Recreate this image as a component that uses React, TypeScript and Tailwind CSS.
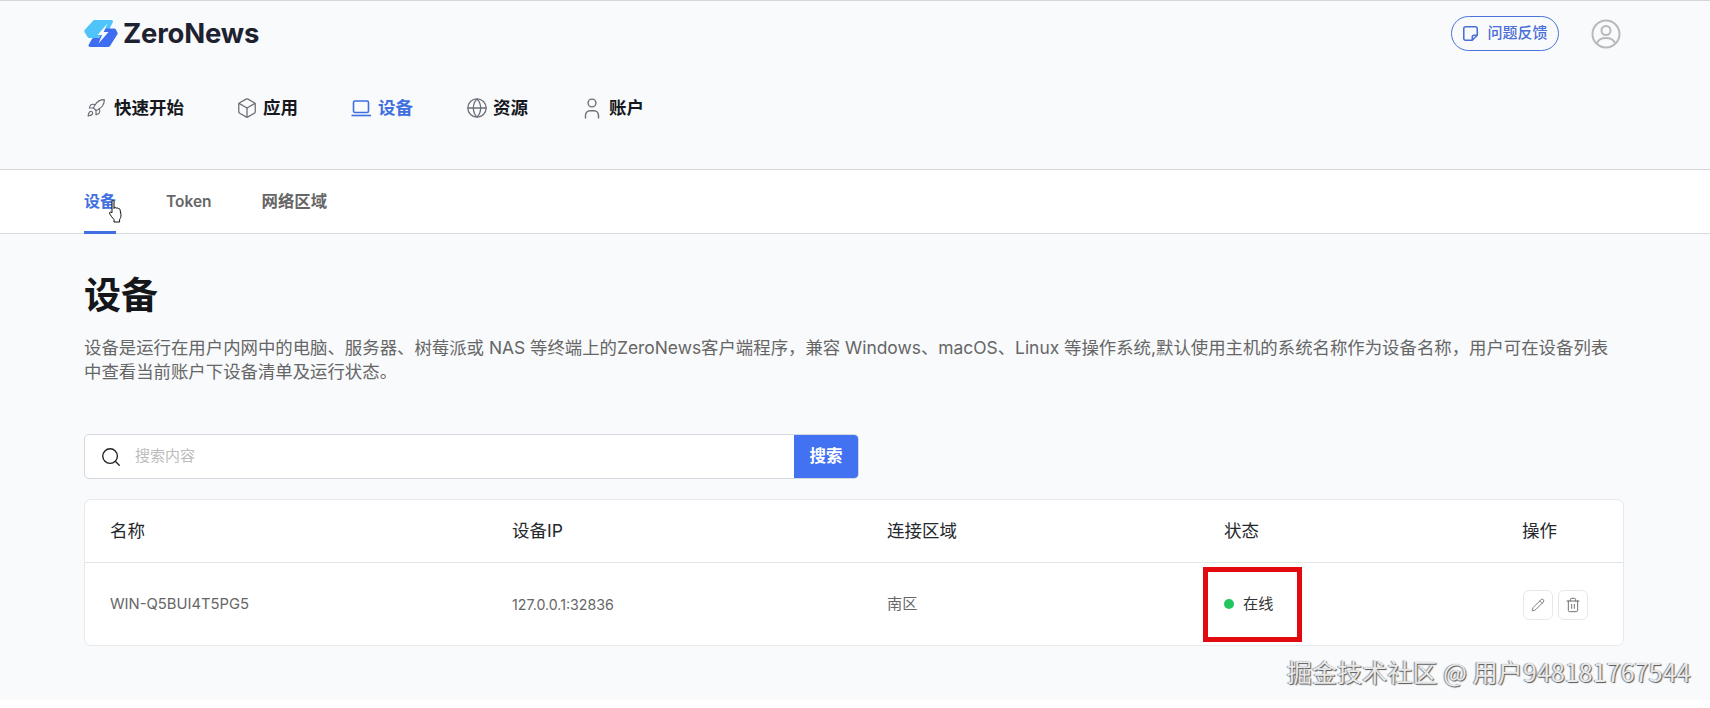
import { Box, Globe, Pencil, Rocket, Search, Trash2 } from 'lucide-react';

const FONT = "font-['Inter','Noto_Sans_CJK_SC',sans-serif]";

const NAV_ITEMS = [
  { label: '快速开始', icon: <Rocket className="h-[20px] w-[20px]" strokeWidth={1.4} />, gap: 'ml-[8px]', mr: 'mr-[52px]' },
  { label: '应用', icon: <Box className="h-[22px] w-[22px]" strokeWidth={1.4} />, gap: 'ml-[5px]', mr: 'mr-[53px]' },
  { label: '设备', icon: <LaptopIcon />, gap: 'ml-[6px]', mr: 'mr-[53px]', active: true },
  { label: '资源', icon: <Globe className="h-[22px] w-[22px]" strokeWidth={1.4} />, gap: 'ml-[5px]', mr: 'mr-[56px]' },
  { label: '账户', icon: <UserIcon />, gap: 'ml-[9px]', mr: '' },
];

function LaptopIcon() {
  return (
    <svg width="21" height="20" viewBox="0 0 21 20" fill="none" stroke="currentColor" strokeWidth="1.6">
      <rect x="2.5" y="3" width="15" height="11.500" rx="1.500" />
      <path d="M0.500 17.500h19.500" />
    </svg>
  );
}

function UserIcon() {
  return (
    <svg width="16" height="21" viewBox="0 0 16 21" fill="none" stroke="currentColor" strokeWidth="1.4">
      <circle cx="8" cy="5" r="3.900" />
      <path d="M1.500 20.500v-3.200a4.500 4.500 0 0 1 4.500-4.500h4a4.500 4.500 0 0 1 4.500 4.500v3.200" />
    </svg>
  );
}

function NoteIcon() {
  return (
    <svg width="17" height="17" viewBox="0 0 24 24" fill="none" stroke="currentColor" strokeWidth="2.200" strokeLinejoin="round">
      <path d="M5 2.500h14a2.500 2.500 0 0 1 2.500 2.500v9.500l-7 7H5A2.500 2.500 0 0 1 2.500 19V5A2.500 2.500 0 0 1 5 2.500z" />
      <path d="M21.500 14.500H17a2.500 2.500 0 0 0-2.500 2.500v4.500" />
    </svg>
  );
}

function Logo() {
  return (
    <svg width="34" height="27" viewBox="0 0 34 27">
      <path d="M10.500 0H27.500a1.500 1.500 0 0 1 1.300 2.200L24 12 14 18H5.300a2 2 0 0 1-1.700-1L0.500 12a2 2 0 0 1 .1-2L8.800 1a2 2 0 0 1 1.700-1z" fill="#4fc4fb" />
      <path d="M21 8.500h9.200a2 2 0 0 1 1.700 1l1.500 3a2 2 0 0 1-.1 2L26 26a2.400 2.400 0 0 1-2 1H6a1.500 1.500 0 0 1-1.300-2.200L7.900 19a2 2 0 0 1 1.700-1H15z" fill="#3f6df0" />
      <path d="M23.500 3.500L13.500 15h4.500l-3.500 8.500 10-11.500h-4.800z" fill="#f8fafc" />
    </svg>
  );
}

function HandCursor() {
  return (
    <svg className="absolute left-[25px] top-[30px]" width="14" height="23" viewBox="0 0 14 23" fill="#fff" stroke="#111" strokeWidth="1">
      <path d="M3 1.500c0-1.300 2-1.300 2 0v7l.3-.8c.6-.8 1.800-.4 1.800.6l.2-.2c.6-.7 1.800-.3 1.800.7.6-.6 1.900-.2 1.900.8l1 4.900c0 2.500-.6 3.900-1.400 5v2.500H5v-2.500C3.600 18 .6 14.500 .6 13c0-1.200 1.200-1.400 2.400-.2z" />
    </svg>
  );
}

export default function App() {
  return (
    <div className={`${FONT} relative flex h-[708px] w-full flex-col overflow-hidden bg-white`}>
      {/* Header */}
      <header className="h-[170px] shrink-0 border-y border-y-[#d4d6d9] bg-[#f8fafc] pl-[84px] pr-[89px]">
        <div className="flex h-[67px] items-start justify-between">
          <div className="mt-[19px] flex items-center gap-[5px]">
            <Logo />
            <span className="text-[27.500px] leading-[27px] font-bold tracking-[-0.2px] text-[#1e2230]">ZeroNews</span>
          </div>
          <div className="mt-[15px] flex items-center">
            <button className="flex h-[35px] w-[108px] items-center justify-center gap-[8px] rounded-full border border-[#4a74dc] text-[15px] font-medium text-[#4a6fd8]">
              <NoteIcon />
              问题反馈
            </button>
            <svg className="ml-[32px]" width="30" height="30" viewBox="0 0 30 30" fill="none" stroke="#b9b9b9" strokeWidth="2">
              <circle cx="15" cy="15" r="13.500" />
              <circle cx="15" cy="11.500" r="4.500" />
              <path d="M6 24c1.500-3.500 5-5 9-5s7.500 1.500 9 5" />
            </svg>
          </div>
        </div>
        <nav className="mt-[18px] flex h-[44px] items-center pl-[2px]">
          {NAV_ITEMS.map((item) => (
            <div key={item.label} className={`flex items-center ${item.mr} ${item.active ? 'text-[#3f6fe0]' : 'text-[#6b6f76]'}`}>
              {item.icon}
              <span className={`${item.gap} text-[17.500px] font-bold ${item.active ? 'text-[#3f6fe0]' : 'text-[#16181d]'}`}>{item.label}</span>
            </div>
          ))}
        </nav>
      </header>

      {/* Tabs */}
      <div className="flex h-[64px] shrink-0 border-b border-b-[#d9dbde] bg-white pl-[84px] text-[16.400px] font-semibold text-[#666]">
        <div className="relative flex h-[64px] w-[32px] items-center whitespace-nowrap border-b-[3px] border-b-[#3f6fe0] text-[16px] text-[#3f6fe0]">
          设备
          <HandCursor />
        </div>
        <div className="ml-[50px] flex items-center text-[15.500px]">Token</div>
        <div className="ml-[50px] flex items-center">网络区域</div>
      </div>

      {/* Content */}
      <main className="flex-1 bg-[#f8fafc] pl-[84px] pr-[86px]">
        <h1 className="mt-[35px] text-[37px] leading-[54px] font-bold text-[#14161a]">设备</h1>
        <p className="mt-[13px] text-[17.400px] leading-[24px] text-[#666]">
          设备是运行在用户内网中的电脑、服务器、树莓派或 NAS 等终端上的ZeroNews客户端程序，兼容 Windows、macOS、Linux 等操作系统,默认使用主机的系统名称作为设备名称，用户可在设备列表中查看当前账户下设备清单及运行状态。
        </p>

        <div className="mt-[50px] flex h-[45px] w-[775px] items-stretch overflow-hidden rounded-[5px] border border-[#d5d8dc] bg-white">
          <div className="flex flex-1 items-center pl-[15px]">
            <Search className="h-[22px] w-[22px] text-[#222]" strokeWidth={1.500} />
            <span className="ml-[13px] text-[15px] text-[#bcbcbc]">搜索内容</span>
          </div>
          <button className="w-[64px] bg-[#4272f2] text-[16.500px] font-semibold text-white">搜索</button>
        </div>

        <div className="mt-[20px] h-[147px] rounded-[7px] border border-[#e7e9ec] bg-white">
          <div className="grid h-[63px] grid-cols-[402px_375px_337px_297px_1fr] items-center border-b border-b-[#e2e4e8] pl-[25px] text-[17.500px] text-[#24272b]">
            <span>名称</span>
            <span>设备IP</span>
            <span>连接区域</span>
            <span>状态</span>
            <span className="ml-[1px]">操作</span>
          </div>
          <div className="grid h-[83px] grid-cols-[402px_375px_337px_297px_1fr] items-center pl-[25px] text-[15.200px] text-[#666]">
            <span className="text-[14.800px]">WIN-Q5BUI4T5PG5</span>
            <span className="text-[14.200px]">127.0.0.1:32836</span>
            <span>南区</span>
            <div className="relative flex items-center text-[#333]">
              <span className="h-[10px] w-[10px] rounded-full bg-[#22c55e]" />
              <span className="ml-[9px]">在线</span>
              <div className="absolute left-[-21px] top-[-26px] h-[75px] w-[99px] border-[5px] border-[#e00a0f]" />
            </div>
            <div className="ml-[2px] flex gap-[5px]">
              <button className="flex h-[30px] w-[30px] items-center justify-center rounded-[6px] border border-[#e6e8eb] text-[#666]">
                <Pencil className="h-[14px] w-[14px]" strokeWidth={1.400} />
              </button>
              <button className="flex h-[30px] w-[30px] items-center justify-center rounded-[6px] border border-[#e6e8eb] text-[#666]">
                <Trash2 className="h-[16px] w-[16px]" strokeWidth={1.400} />
              </button>
            </div>
          </div>
        </div>
      </main>
      <div className="h-[8px] shrink-0 bg-white" />

      {/* Watermark */}
      <span className="absolute left-[1287px] top-[656px] text-[25px] leading-[30px] tracking-[0.1px] whitespace-nowrap text-[#e9e9e9] [text-shadow:1px_1px_1px_#555,-1px_0_1px_#888] font-['Noto_Sans_CJK_SC',sans-serif]">
        掘金技术社区 @ 用户948181767544
      </span>
    </div>
  );
}
